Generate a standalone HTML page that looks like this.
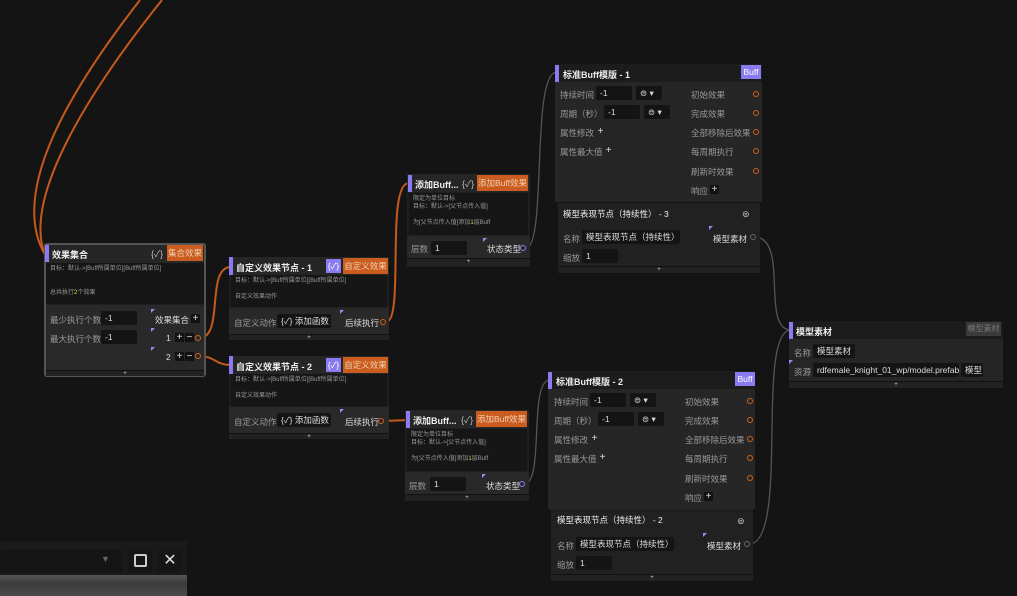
<!DOCTYPE html>
<html><head><meta charset="utf-8"><style>
*{margin:0;padding:0;box-sizing:border-box}
body{width:1017px;height:596px;background:#141414;position:relative;overflow:hidden;font-family:"Liberation Sans","Noto Sans CJK SC",sans-serif;color:#ccc}
.a{position:absolute;white-space:nowrap}
.n{position:absolute;background:#1f1f1f}
.h{position:absolute;background:#262626;color:#eee;font-weight:bold;font-size:9px}
.d{position:absolute;background:#161616;color:#999;font-size:6px;line-height:8px;padding:2px 4px}
.r{position:absolute;background:#292929}
.f{position:absolute;background:#222;border-top:1px solid #111;color:#ccc;font-size:6px;text-align:center;line-height:6px}
.l{position:absolute;font-size:8.5px;color:#999;white-space:nowrap}
.w{color:#ddd}
.in{position:absolute;background:#141414;color:#ddd;font-size:8.5px;padding-left:4px;line-height:14px;height:14px;border-radius:2px}
.bar{position:absolute;width:4px;background:#8a7cf0}
.tag{position:absolute;background:#c95c1e;color:#f0d0b0;font-size:8.5px;text-align:center;line-height:16px}
.pt{position:absolute;background:#8a7cf0;color:#fff;font-size:8.5px;text-align:center;line-height:14px}
.dot{position:absolute;width:6px;height:6px;border-radius:50%;border:1.5px solid #d0601e}
.gd{position:absolute;width:6px;height:6px;border-radius:50%;border:1.2px solid #666}
.pl{position:absolute;width:9px;height:9px;background:#111;color:#ddd;font-size:10px;line-height:9px;text-align:center}
.cor{position:absolute;width:0;height:0;border-top:4px solid #9a8cf0;border-right:4px solid transparent}
</style></head><body>
<svg class="a" style="left:0;top:0" width="1017" height="596">
<g fill="none" stroke-width="2" stroke="#c45a1c">
<path d="M140 0 C70 90 10 190 44 253"/>
<path d="M162 0 C90 90 20 200 46 257"/>
<path d="M199 338 C225 338 205 267 231 267"/>
<path d="M199 356 C215 356 215 365 231 365"/>
<path d="M386 322 C405 322 385 183 409 183"/>
<path d="M384 421 L409 420"/>
</g>
<g fill="none" stroke-width="1.3" stroke="#555">
<path d="M525 249 C548 249 530 72 557 72"/>
<path d="M524 484 C545 484 528 380 550 380"/>
<path d="M754 237 C790 237 760 330 791 330"/>
<path d="M749 544 C790 544 755 330 791 330"/>
</g>
</svg>

<!-- Node A -->
<div class="n" style="left:44px;top:243px;width:162px;height:134px;border:2px solid #555;border-radius:3px"></div>
<div class="h" style="left:46px;top:245px;width:158px;height:18px"></div>
<div class="bar" style="left:45px;top:245px;height:17px"></div>
<div class="a" style="left:52px;top:248px;font-size:9px;font-weight:bold;color:#eee">效果集合</div>
<div class="a" style="left:151px;top:247px;font-size:9px;color:#bbb">{✓}</div>
<div class="tag" style="left:167px;top:245px;width:36px">集合效果</div>
<div class="d" style="left:46px;top:263px;width:158px;height:41px">目标：默认-&gt;[Buff所属单位][Buff所属单位]<br><br><br>总共执行<span style="color:#dd4">2</span>个效果</div>
<div class="r" style="left:46px;top:305px;width:158px;height:65px"></div>
<div class="l" style="left:50px;top:314px">最少执行个数</div><div class="in" style="left:101px;top:311px;width:36px">-1</div>
<div class="l" style="left:50px;top:333px">最大执行个数</div><div class="in" style="left:101px;top:330px;width:36px">-1</div>
<div class="cor" style="left:151px;top:309px"></div><div class="l w" style="left:155px;top:314px">效果集合</div><div class="pl" style="left:191px;top:314px">+</div>
<div class="cor" style="left:151px;top:328px"></div><div class="l w" style="left:166px;top:333px">1</div><div class="pl" style="left:175px;top:333px">+</div><div class="pl" style="left:185px;top:333px">−</div><div class="dot" style="left:195px;top:335px"></div>
<div class="cor" style="left:151px;top:347px"></div><div class="l w" style="left:166px;top:352px">2</div><div class="pl" style="left:175px;top:352px">+</div><div class="pl" style="left:185px;top:352px">−</div><div class="dot" style="left:195px;top:353px"></div>
<div class="f" style="left:46px;top:370px;width:158px;height:6px">+</div>

<!-- B1, B2 -->
<div class="n" style="left:229px;top:257px;width:160px;height:83px"></div>
<div class="h" style="left:229px;top:257px;width:160px;height:18px"></div>
<div class="bar" style="left:229px;top:257px;height:18px"></div>
<div class="a" style="left:236px;top:261px;font-size:9px;font-weight:bold;color:#eee">自定义效果节点 - 1</div>
<div class="pt" style="left:326px;top:259px;width:15px">{✓}</div>
<div class="tag" style="left:343px;top:258px;width:45px">自定义效果</div>
<div class="d" style="left:231px;top:275px;width:156px;height:32px">目标：默认-&gt;[Buff所属单位][Buff所属单位]<br><br>自定义效果动作</div>
<div class="r" style="left:229px;top:308px;width:160px;height:26px"></div>
<div class="l" style="left:234px;top:317px">自定义动作</div><div class="in" style="left:277px;top:314px;width:54px">{✓} 添加函数</div>
<div class="cor" style="left:340px;top:310px"></div><div class="l w" style="left:345px;top:317px">后续执行</div><div class="dot" style="left:380px;top:319px"></div>
<div class="f" style="left:229px;top:334px;width:160px;height:6px">+</div>

<div class="n" style="left:229px;top:356px;width:160px;height:83px"></div>
<div class="h" style="left:229px;top:356px;width:160px;height:18px"></div>
<div class="bar" style="left:229px;top:356px;height:18px"></div>
<div class="a" style="left:236px;top:360px;font-size:9px;font-weight:bold;color:#eee">自定义效果节点 - 2</div>
<div class="pt" style="left:326px;top:358px;width:15px">{✓}</div>
<div class="tag" style="left:343px;top:357px;width:45px">自定义效果</div>
<div class="d" style="left:231px;top:374px;width:156px;height:32px">目标：默认-&gt;[Buff所属单位][Buff所属单位]<br><br>自定义效果动作</div>
<div class="r" style="left:229px;top:407px;width:160px;height:26px"></div>
<div class="l" style="left:234px;top:416px">自定义动作</div><div class="in" style="left:277px;top:413px;width:54px">{✓} 添加函数</div>
<div class="cor" style="left:340px;top:409px"></div><div class="l w" style="left:345px;top:416px">后续执行</div><div class="dot" style="left:378px;top:418px"></div>
<div class="f" style="left:229px;top:433px;width:160px;height:6px">+</div>

<!-- C1, C2 -->
<div class="n" style="left:407px;top:174px;width:123px;height:93px"></div>
<div class="h" style="left:407px;top:174px;width:123px;height:18px"></div>
<div class="bar" style="left:408px;top:175px;height:17px"></div>
<div class="a" style="left:415px;top:178px;font-size:9px;font-weight:bold;color:#eee">添加Buff...</div>
<div class="a" style="left:462px;top:177px;font-size:9px;color:#bbb">{✓}</div>
<div class="tag" style="left:477px;top:175px;width:51px">添加Buff效果</div>
<div class="d" style="left:409px;top:193px;width:119px;height:42px">限定为单位目标<br>目标：默认-&gt;[父节点传入值]<br><br>为[父节点传入值]添加<span style="color:#dd4">1</span>层Buff</div>
<div class="r" style="left:407px;top:236px;width:123px;height:22px"></div>
<div class="l" style="left:411px;top:243px">层数</div><div class="in" style="left:431px;top:241px;width:36px">1</div>
<div class="cor" style="left:483px;top:238px"></div><div class="l w" style="left:487px;top:243px">状态类型</div><div class="dot" style="left:520px;top:245px;border-color:#8a7cf0"></div>
<div class="f" style="left:407px;top:258px;width:123px;height:8px">+</div>

<div class="n" style="left:405px;top:410px;width:124px;height:91px"></div>
<div class="h" style="left:405px;top:410px;width:124px;height:18px"></div>
<div class="bar" style="left:406px;top:411px;height:17px"></div>
<div class="a" style="left:413px;top:414px;font-size:9px;font-weight:bold;color:#eee">添加Buff...</div>
<div class="a" style="left:461px;top:413px;font-size:9px;color:#bbb">{✓}</div>
<div class="tag" style="left:476px;top:411px;width:51px">添加Buff效果</div>
<div class="d" style="left:407px;top:429px;width:120px;height:42px">限定为单位目标<br>目标：默认-&gt;[父节点传入值]<br><br>为[父节点传入值]添加<span style="color:#dd4">1</span>层Buff</div>
<div class="r" style="left:405px;top:472px;width:124px;height:22px"></div>
<div class="l" style="left:409px;top:480px">层数</div><div class="in" style="left:430px;top:477px;width:36px">1</div>
<div class="cor" style="left:482px;top:474px"></div><div class="l w" style="left:486px;top:480px">状态类型</div><div class="dot" style="left:519px;top:481px;border-color:#8a7cf0"></div>
<div class="f" style="left:405px;top:494px;width:124px;height:7px">+</div>

<!-- D1 -->
<div class="n" style="left:555px;top:64px;width:207px;height:138px;background:#262626"></div>
<div class="h" style="left:555px;top:64px;width:207px;height:18px;background:#1c1c1c"></div>
<div class="bar" style="left:555px;top:65px;height:17px"></div>
<div class="a" style="left:563px;top:68px;font-size:9px;font-weight:bold;color:#eee">标准Buff模版 - 1</div>
<div class="pt" style="left:741px;top:65px;width:20px">Buff</div>
<div class="l" style="left:560px;top:89px">持续时间</div><div class="in" style="left:596px;top:86px;width:36px">-1</div><div class="in" style="left:636px;top:86px;width:26px">⊜ ▾</div>
<div class="l" style="left:560px;top:108px">周期（秒）</div><div class="in" style="left:604px;top:105px;width:36px">-1</div><div class="in" style="left:644px;top:105px;width:26px">⊜ ▾</div>
<div class="l" style="left:560px;top:127px">属性修改</div><div class="pl" style="left:596px;top:127px;background:none">+</div>
<div class="l" style="left:560px;top:146px">属性最大值</div><div class="pl" style="left:604px;top:146px;background:none">+</div>
<div class="l" style="left:691px;top:89px">初始效果</div><div class="dot" style="left:753px;top:91px"></div>
<div class="l" style="left:691px;top:108px">完成效果</div><div class="dot" style="left:753px;top:110px"></div>
<div class="l" style="left:691px;top:127px">全部移除后效果</div><div class="dot" style="left:753px;top:129px"></div>
<div class="l" style="left:691px;top:146px">每周期执行</div><div class="dot" style="left:753px;top:148px"></div>
<div class="l" style="left:691px;top:166px">刷新时效果</div><div class="dot" style="left:753px;top:168px"></div>
<div class="l" style="left:691px;top:185px">响应</div><div class="pl" style="left:710px;top:185px">+</div>
<div class="n" style="left:558px;top:203px;width:202px;height:70px;background:#212121"></div>
<div class="a" style="left:563px;top:208px;font-size:8.5px;color:#eee">模型表现节点（持续性） - 3</div>
<div class="a" style="left:742px;top:209px;font-size:9px;color:#ccc">⊜</div>
<div class="l" style="left:563px;top:233px">名称</div><div class="in" style="left:582px;top:230px;width:98px">模型表现节点（持续性）</div>
<div class="cor" style="left:709px;top:226px"></div><div class="l w" style="left:713px;top:233px">模型素材</div><div class="gd" style="left:750px;top:234px"></div>
<div class="l" style="left:563px;top:252px">缩放</div><div class="in" style="left:582px;top:249px;width:36px">1</div>
<div class="f" style="left:558px;top:266px;width:202px;height:7px">+</div>

<!-- D2 -->
<div class="n" style="left:548px;top:371px;width:207px;height:138px;background:#262626"></div>
<div class="h" style="left:548px;top:371px;width:207px;height:18px;background:#1c1c1c"></div>
<div class="bar" style="left:548px;top:372px;height:17px"></div>
<div class="a" style="left:556px;top:375px;font-size:9px;font-weight:bold;color:#eee">标准Buff模版 - 2</div>
<div class="pt" style="left:735px;top:372px;width:20px">Buff</div>
<div class="l" style="left:554px;top:396px">持续时间</div><div class="in" style="left:590px;top:393px;width:36px">-1</div><div class="in" style="left:630px;top:393px;width:26px">⊜ ▾</div>
<div class="l" style="left:554px;top:415px">周期（秒）</div><div class="in" style="left:598px;top:412px;width:36px">-1</div><div class="in" style="left:638px;top:412px;width:26px">⊜ ▾</div>
<div class="l" style="left:554px;top:434px">属性修改</div><div class="pl" style="left:590px;top:434px;background:none">+</div>
<div class="l" style="left:554px;top:453px">属性最大值</div><div class="pl" style="left:598px;top:453px;background:none">+</div>
<div class="l" style="left:685px;top:396px">初始效果</div><div class="dot" style="left:747px;top:398px"></div>
<div class="l" style="left:685px;top:415px">完成效果</div><div class="dot" style="left:747px;top:417px"></div>
<div class="l" style="left:685px;top:434px">全部移除后效果</div><div class="dot" style="left:747px;top:436px"></div>
<div class="l" style="left:685px;top:453px">每周期执行</div><div class="dot" style="left:747px;top:455px"></div>
<div class="l" style="left:685px;top:473px">刷新时效果</div><div class="dot" style="left:747px;top:475px"></div>
<div class="l" style="left:685px;top:492px">响应</div><div class="pl" style="left:704px;top:492px">+</div>
<div class="n" style="left:551px;top:509px;width:202px;height:72px;background:#212121"></div>
<div class="a" style="left:557px;top:514px;font-size:8.5px;color:#eee">模型表现节点（持续性） - 2</div>
<div class="a" style="left:737px;top:516px;font-size:9px;color:#ccc">⊜</div>
<div class="l" style="left:557px;top:540px">名称</div><div class="in" style="left:576px;top:537px;width:98px">模型表现节点（持续性）</div>
<div class="cor" style="left:703px;top:533px"></div><div class="l w" style="left:707px;top:540px">模型素材</div><div class="gd" style="left:744px;top:541px"></div>
<div class="l" style="left:557px;top:559px">缩放</div><div class="in" style="left:576px;top:556px;width:36px">1</div>
<div class="f" style="left:551px;top:574px;width:202px;height:7px">+</div>

<!-- E -->
<div class="n" style="left:789px;top:321px;width:214px;height:67px;background:#262626"></div>
<div class="h" style="left:789px;top:321px;width:214px;height:18px;background:#1c1c1c"></div>
<div class="bar" style="left:789px;top:322px;height:17px"></div>
<div class="a" style="left:796px;top:325px;font-size:9px;font-weight:bold;color:#eee">模型素材</div>
<div class="a" style="left:966px;top:322px;width:35px;height:14px;background:#3a3a3a;color:#777;font-size:8px;line-height:14px;text-align:center">模型素材</div>
<div class="l" style="left:794px;top:347px">名称</div><div class="in" style="left:813px;top:344px;width:42px">模型素材</div>
<div class="cor" style="left:789px;top:360px"></div>
<div class="l" style="left:794px;top:366px">资源</div><div class="in" style="left:813px;top:363px;width:146px">rdfemale_knight_01_wp/model.prefab</div><div class="in" style="left:961px;top:363px;width:22px">模型</div>
<div class="f" style="left:789px;top:381px;width:214px;height:7px">+</div>

<!-- bottom-left panel -->
<div class="a" style="left:0;top:541px;width:187px;height:55px;background:#1a1a1a;border-radius:3px"></div>
<div class="a" style="left:0;top:549px;width:122px;height:24px;background:#151515;border-radius:3px"></div>
<div class="a" style="left:101px;top:554px;font-size:9px;color:#666">▼</div>
<div class="a" style="left:128px;top:549px;width:24px;height:24px;background:#161616;border-radius:3px"></div>
<div class="a" style="left:134px;top:554px;width:13px;height:13px;border:2px solid #ccc;border-radius:2px"></div>
<div class="a" style="left:158px;top:549px;width:24px;height:24px;background:#161616;border-radius:3px;color:#ddd;font-size:16px;text-align:center;line-height:23px">✕</div>
<div class="a" style="left:0;top:575px;width:187px;height:21px;background:linear-gradient(#555,#3c3c3c 40%,#4a4a4a)"></div>
</body></html>
